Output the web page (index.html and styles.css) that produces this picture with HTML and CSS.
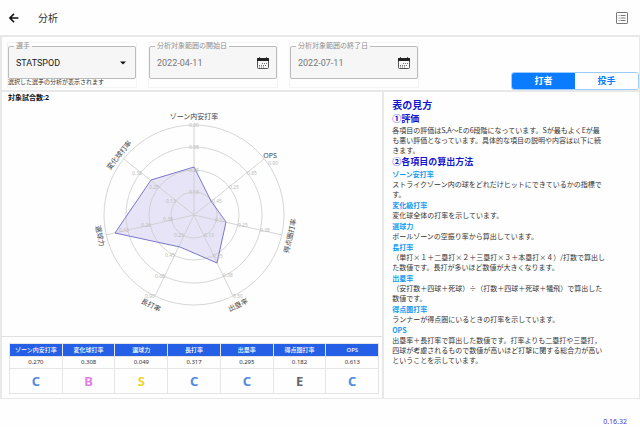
FILE: index.html
```html
<!DOCTYPE html>
<html lang="ja">
<head>
<meta charset="utf-8">
<title>分析</title>
<meta name="viewport" content="width=device-width, initial-scale=1">
<link rel="stylesheet" href="styles.css">
</head>
<body>
<header class="topbar">
  <button class="icon-button" type="button" aria-label="戻る">
    <svg class="icon-back" viewBox="0 0 10 10"><path d="M9.4 5H1M5 .9 .9 5 5 9.1"/></svg>
  </button>
  <h1 class="title">分析</h1>
  <button class="icon-button push-end" type="button" aria-label="一覧">
    <svg class="icon-list" viewBox="0 0 12 12"><rect x=".5" y=".5" width="11" height="11" rx=".6"/><path d="M2.6 3.5h1M4.6 3.5h5M2.6 6h1M4.6 6h5M2.6 8.5h1M4.6 8.5h5"/></svg>
  </button>
</header>
<main class="board">
  <form class="filters">
    <div class="field">
      <fieldset class="outline">
        <legend><label for="player">選手</label></legend>
        <select id="player" class="control"><option>STATSPOD</option></select>
        <svg class="caret" viewBox="0 0 6 4"><path d="M0 .5h6L3 3.5z"/></svg>
      </fieldset>
      <p class="hint">選択した選手の分析が表示されます</p>
    </div>
    <div class="field">
      <fieldset class="outline">
        <legend><label for="from">分析対象範囲の開始日</label></legend>
        <input id="from" class="control muted" type="text" value="2022-04-11">
        <button class="icon-button" type="button" aria-label="開始日を選ぶ">
          <svg class="icon-calendar" viewBox="0 0 12 12"><rect x=".5" y="1.5" width="11" height="10" rx="1"/><path class="solid" d="M0 1h2V.3h1V1h6V.3h1V1h2v3H0z"/><path class="dots" d="M5 6.5h5M2 8.5h8M2 10h5"/></svg>
        </button>
      </fieldset>
    </div>
    <div class="field">
      <fieldset class="outline">
        <legend><label for="to">分析対象範囲の終了日</label></legend>
        <input id="to" class="control muted" type="text" value="2022-07-11">
        <button class="icon-button" type="button" aria-label="終了日を選ぶ">
          <svg class="icon-calendar" viewBox="0 0 12 12"><rect x=".5" y="1.5" width="11" height="10" rx="1"/><path class="solid" d="M0 1h2V.3h1V1h6V.3h1V1h2v3H0z"/><path class="dots" d="M5 6.5h5M2 8.5h8M2 10h5"/></svg>
        </button>
      </fieldset>
    </div>
    <div class="segments">
      <button class="segment active" type="button" aria-pressed="true">打者</button>
      <button class="segment" type="button" aria-pressed="false">投手</button>
    </div>
  </form>
  <div class="columns">
    <section class="stats">
      <div class="chart-panel">
        <p class="games">対象試合数:2</p>
        <svg class="radar" viewBox="0 0 240 220" role="img" aria-label="打撃成績のレーダーチャート">
          <g transform="translate(120 112)">
            <polygon class="area" points="0,-48 17,-14 32,7 23,48 -14,32 -79,18 -43,-35"/>
            <g class="grid">
              <circle r="23"/><circle r="45"/><circle r="68"/><circle r="90"/>
              <path d="M0 0V-90M0 0 70-56M0 0 88 20M0 0 39 81M0 0-39 81M0 0-88 20M0 0-70-56"/>
            </g>
            <polygon class="outline-shape" points="0,-48 17,-14 32,7 23,48 -14,32 -79,18 -43,-35"/>
            <g class="ticks">
              <text x="0" y="-88">0.50</text><text x="0" y="-66">0.38</text><text x="0" y="-43">0.25</text><text x="0" y="-21">0.13</text>
              <text x="23" y="-12">0.45</text><text x="40" y="-26">0.25</text><text x="58" y="-40">0.85</text><text x="79" y="-50">0.90</text>
              <text x="26" y="7">0.13</text><text x="49" y="12">0.25</text><text x="71" y="17">0.38</text>
              <text x="15" y="22">0.13</text><text x="24" y="43">0.25</text><text x="34" y="62">0.38</text><text x="44" y="83">0.50</text>
              <text x="-15" y="22">0.23</text><text x="-24" y="42">0.45</text><text x="-34" y="63">0.68</text><text x="-44" y="83">0.90</text>
              <text x="-26" y="6">0.38</text><text x="-48" y="12">0.26</text><text x="-70" y="17">0.13</text>
              <text x="-23" y="-12">0.13</text><text x="-40" y="-26">0.25</text><text x="-57" y="-40">0.38</text>
            </g>
            <g class="axes">
              <text x="0" y="-99">ゾーン内安打率</text>
              <text x="76" y="-60">OPS</text>
              <text transform="translate(96 21) rotate(-77)">得点圏打率</text>
              <text transform="translate(44 90) rotate(-26)">出塁率</text>
              <text transform="translate(-43 90) rotate(26)">長打率</text>
              <text transform="translate(-94 21) rotate(77)">選球力</text>
              <text transform="translate(-75 -60) rotate(-51)">変化球打率</text>
            </g>
          </g>
        </svg>
      </div>
      <div class="table-panel">
        <table class="scores">
          <thead>
            <tr><th scope="col">ゾーン内安打率</th><th scope="col">変化球打率</th><th scope="col">選球力</th><th scope="col">長打率</th><th scope="col">出塁率</th><th scope="col">得点圏打率</th><th scope="col">OPS</th></tr>
          </thead>
          <tbody>
            <tr><td>0.270</td><td>0.308</td><td>0.049</td><td>0.317</td><td>0.295</td><td>0.182</td><td>0.613</td></tr>
            <tr class="grades"><td class="c">C</td><td class="b">B</td><td class="s">S</td><td class="c">C</td><td class="c">C</td><td class="e">E</td><td class="c">C</td></tr>
          </tbody>
        </table>
      </div>
    </section>
    <section class="guide">
      <h2>表の見方</h2>
      <h3>①評価</h3>
      <p>各項目の評価はS,A〜Eの6段階になっています。Sが最もよくEが最も悪い評価となっています。具体的な項目の説明や内容は以下に続きます。</p>
      <h3>②各項目の算出方法</h3>
      <h4>ゾーン安打率</h4>
      <p>ストライクゾーン内の球をどれだけヒットにできているかの指標です。</p>
      <h4>変化級打率</h4>
      <p>変化球全体の打率を示しています。</p>
      <h4>選球力</h4>
      <p>ボールゾーンの空振り率から算出しています。</p>
      <h4>長打率</h4>
      <p>（単打×１＋二塁打×２＋三塁打×３＋本塁打×４）/打数で算出した数値です。長打が多いほど数値が大きくなります。</p>
      <h4>出塁率</h4>
      <p>（安打数＋四球＋死球）÷（打数＋四球＋死球＋犠飛）で算出した数値です。</p>
      <h4>得点圏打率</h4>
      <p>ランナーが得点圏にいるときの打率を示しています。</p>
      <h4>OPS</h4>
      <p>出塁率＋長打率で算出した数値です。打率よりも二塁打や三塁打，四球が考慮されるもので数値が高いほど打撃に関する総合力が高いということを示しています。</p>
    </section>
  </div>
</main>
<footer class="version">0.16.32</footer>
</body>
</html>
```
FILE: styles.css
```css
* { box-sizing: border-box; }
body {
  margin: 0;
  background: #fefefe;
  color: #333;
  font: 7px/10px "Noto Sans", "Noto Sans CJK JP", sans-serif;
}
h1, h2, h3, h4, p { margin: 0; }
button, select, input { font: inherit; color: inherit; margin: 0; }
svg { display: block; fill: none; }

.topbar { display: flex; align-items: center; height: 35px; padding: 0 12px 0 9px; }
.icon-button { padding: 0; border: 0; background: none; }
.title { margin-left: 19px; font-size: 10px; font-weight: 400; line-height: 14px; }
.push-end { margin-left: auto; }
.icon-back { width: 10px; height: 10px; stroke: #111; stroke-width: 1.5; }
.icon-list { width: 12px; height: 12px; stroke: #777; }

.board { border: 2px solid #e8e8e8; border-right-width: 1px; border-bottom-width: 1px; }
.filters { display: flex; align-items: flex-start; gap: 12px; height: 53px; padding: 5px 0 0 5px; }
.field { width: 130px; height: 46px; padding: 0 1px; border: 1px solid #f4f4f4; }
.field + .field { margin-left: -1px; }
.outline {
  display: flex;
  align-items: center;
  min-width: 0;
  height: 37px;
  margin: -1px -1px 0;
  padding: 0 7px 3px;
  border: 1px solid #bbb;
  border-radius: 2px;
  background: #f6f6f6;
}
.outline legend { margin-left: -2px; padding: 0 2px; color: #909090; line-height: 8px; }
.control {
  flex: 1;
  min-width: 0;
  height: 24px;
  padding: 0;
  border: 0;
  outline: 0;
  background: none;
  appearance: none;
  color: #222;
  font: 9px/24px Roboto, sans-serif;
}
.muted { color: #777; }
.caret { width: 6px; height: 4px; margin-right: 2px; fill: #111; }
.icon-calendar { width: 12px; height: 12px; stroke: #555; }
.icon-calendar .solid { fill: #222; stroke: none; }
.icon-calendar .dots { stroke: #777; stroke-dasharray: 1 1; }
.hint { margin-left: -1px; font-size: 6px; line-height: 7px; white-space: nowrap; }
.segments {
  display: flex;
  align-self: flex-end;
  flex: 0 1 128px;
  height: 18px;
  margin-left: auto;
  border: 1px solid #9bcbff;
  border-radius: 3px;
  overflow: hidden;
}
.segment { flex: 1; padding: 0; border: 0; background: #fff; color: #0a7cff; font-size: 9px; font-weight: 700; line-height: 16px; }
.segment.active { background: #0a7cff; color: #fff; }

.columns { display: grid; grid-template-columns: 3fr 2fr; border-top: 2px solid #e8e8e8; }
.stats { display: flex; flex-direction: column; border-right: 2px solid #e8e8e8; }
.chart-panel { padding: 1px 2px 13px 6px; }
.games { color: #111; font-weight: 700; }
.radar { width: 240px; height: 220px; margin: 0 auto; }
.area { fill: #e6e4f6; }
.grid { stroke: #ccc; stroke-width: 1; stroke-opacity: .8; }
.outline-shape { stroke: #7a77cc; stroke-width: 1; }
.ticks { fill: #bbb; font-size: 5px; text-anchor: middle; }
.axes { fill: #444; font-size: 7px; text-anchor: middle; dominant-baseline: central; }

.table-panel { flex: 1; padding: 6px 3px 4px 7px; border-top: 1px solid #e0e0e0; }
.scores { width: 100%; border-collapse: collapse; table-layout: fixed; text-align: center; }
.scores th, .scores td { padding: 0; border: 1px solid #e5e5e5; }
.scores th { height: 13px; background: #245fe6; color: #fff; font-size: 6px; font-weight: 500; line-height: 11px; white-space: nowrap; }
.scores td { height: 12px; font-size: 6px; line-height: 11px; }
.scores .grades td { height: 25px; font-size: 13px; font-weight: 700; line-height: 24px; }
.scores .c { color: #4f8be0; }
.scores .b { color: #e47fe4; }
.scores .s { color: #f0d42a; }
.scores .e { color: #666; }

.guide { padding: 6px 33px 30px 8px; font-family: "Noto Sans CJK JP", sans-serif; }
.guide h2 { color: #1414d2; font-size: 10px; line-height: 14px; }
.guide h3 { color: #1414d2; font-size: 9px; line-height: 13px; }
.guide h4 { margin-top: 1px; color: #129bf5; font-size: 7px; line-height: 10px; }
.version { padding: 18px 13px 0; color: #4a35d8; text-align: right; }
```
